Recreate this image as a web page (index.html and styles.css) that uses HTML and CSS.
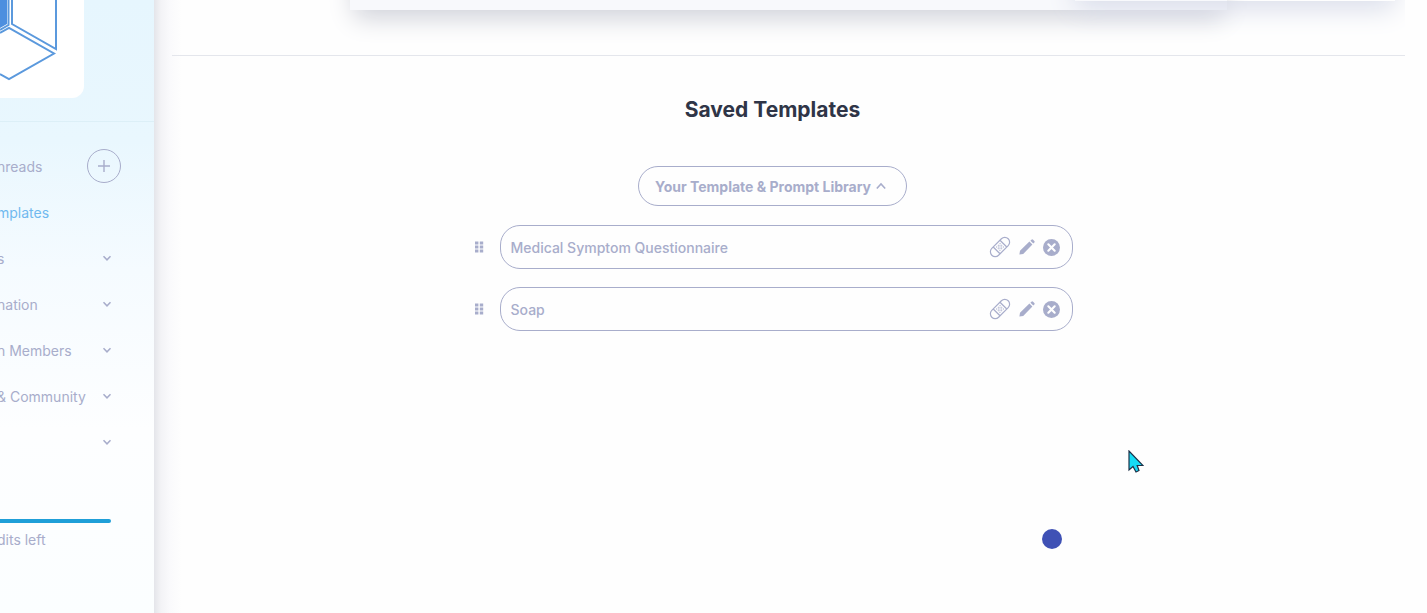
FILE: index.html
```
<!DOCTYPE html>
<html lang="en">
<head>
    <meta charset="UTF-8">
    <meta name="viewport" content="width=device-width, initial-scale=1.0">
    <title>Saved Templates</title>
    <link rel="stylesheet" href="styles.css">
</head>
<body>

    <!-- shared icons -->
    <svg class="sprite" aria-hidden="true">
        <symbol id="icon-down" viewBox="0 0 10 10">
            <path d="M1.5 3.2 5 6.8 8.5 3.2" fill="none" stroke="currentColor" stroke-width="1.5"/>
        </symbol>
        <symbol id="icon-grip" viewBox="0 0 10 12">
            <path d="M1 .5h3.400v3H1zM5.800.5h3.400v3H5.800zM1 4.500h3.400v3H1zM5.800 4.500h3.400v3H5.800zM1 8.500h3.400v3H1zM5.800 8.500h3.400v3H5.800z" fill="currentColor"/>
        </symbol>
        <symbol id="icon-bandage" viewBox="0 0 22 22">
            <g transform="rotate(-45 11 11)" fill="none" stroke="currentColor" stroke-width="1.2">
                <rect x="-0.6" y="6.2" width="23.2" height="9.600" rx="4.8"/>
                <path d="M6.200 6.200v9.600M15.800 6.200v9.600"/>
                <path d="M8 8.600h1M10.500 8.600h1M13 8.600h1M8 11h1M10.500 11h1M13 11h1M8 13.400h1M10.500 13.400h1M13 13.400h1M9.300 9.800h1M11.700 9.800h1M9.300 12.200h1M11.700 12.200h1" stroke-width="1"/>
            </g>
        </symbol>
        <symbol id="icon-pencil" viewBox="0 0 16 16">
            <path d="M0.4 15.6 1 11.8 10.4 2.6 13.4 5.6 4.2 15zM11.4 1.7 12.4.7a1.2 1.2 0 0 1 1.7 0l1.2 1.2a1.2 1.2 0 0 1 0 1.7l-1 1z" fill="currentColor"/>
        </symbol>
        <symbol id="icon-close" viewBox="0 0 16 16">
            <circle cx="8" cy="8" r="8" fill="currentColor"/>
            <path d="M5 5 11 11M11 5 5 11" stroke="#fff" stroke-width="2" stroke-linecap="round"/>
        </symbol>
    </svg>

    <div class="page">
        <aside class="sidebar">
            <div class="brand">
                <svg class="logo" viewBox="0 0 84 98" role="img" aria-label="Logo">
                    <path d="M0 0H7V24L0 28z" fill="#4d8fdf"/>
                    <path d="M8.500 0V25L0 30M12 0V24L56 49V0M0 33 9 28 54 53.500 9 79 0 74" fill="none" stroke="#5b99dd" stroke-width="2"/>
                </svg>
            </div>

            <nav class="menu">
                <div class="menu-item">
                    <a href="#">hreads</a>
                    <button type="button" class="add" aria-label="New thread">
                        <svg width="14" height="14" viewBox="0 0 14 14"><path d="M7 1v12M1 7h12" stroke="currentColor" stroke-width="1.4"/></svg>
                    </button>
                </div>
                <div class="menu-item active"><a href="#">mplates</a></div>
                <div class="menu-item"><a href="#">s</a><svg class="arrow"><use href="#icon-down"/></svg></div>
                <div class="menu-item"><a href="#">nation</a><svg class="arrow"><use href="#icon-down"/></svg></div>
                <div class="menu-item"><a href="#">n Members</a><svg class="arrow"><use href="#icon-down"/></svg></div>
                <div class="menu-item"><a href="#">&amp; Community</a><svg class="arrow"><use href="#icon-down"/></svg></div>
                <div class="menu-item"><a href="#" aria-label="More"></a><svg class="arrow"><use href="#icon-down"/></svg></div>
            </nav>

            <div class="credits">
                <div class="credits-bar"></div>
                <p>dits left</p>
            </div>
        </aside>

        <main class="main">
            <div class="top">
                <div class="card"></div>
                <div class="card-side"></div>
            </div>

            <section class="templates">
                <h1>Saved Templates</h1>
                <button type="button" class="library">
                    Your Template &amp; Prompt Library
                    <svg width="10" height="10" viewBox="0 0 10 10"><path d="M.8 7.500 5 3 9.200 7.500" fill="none" stroke="currentColor" stroke-width="1.6"/></svg>
                </button>

                <ul class="list">
                    <li>
                        <svg class="grip"><use href="#icon-grip"/></svg>
                        <div class="template">
                            <span>Medical Symptom Questionnaire</span>
                            <button type="button" aria-label="Patch"><svg width="22" height="22"><use href="#icon-bandage"/></svg></button>
                            <button type="button" aria-label="Edit"><svg width="16" height="16"><use href="#icon-pencil"/></svg></button>
                            <button type="button" aria-label="Delete"><svg width="17" height="17"><use href="#icon-close"/></svg></button>
                        </div>
                    </li>
                    <li>
                        <svg class="grip"><use href="#icon-grip"/></svg>
                        <div class="template">
                            <span>Soap</span>
                            <button type="button" aria-label="Patch"><svg width="22" height="22"><use href="#icon-bandage"/></svg></button>
                            <button type="button" aria-label="Edit"><svg width="16" height="16"><use href="#icon-pencil"/></svg></button>
                            <button type="button" aria-label="Delete"><svg width="17" height="17"><use href="#icon-close"/></svg></button>
                        </div>
                    </li>
                </ul>
            </section>
        </main>
    </div>

    <!-- floating over the page -->
    <div class="dot"></div>
    <svg class="pointer" viewBox="0 0 16 23" aria-hidden="true">
        <path d="M1 1V20L5 16.500 8 22 11 20.500 9.200 15.500H15z" fill="#16dcf5" stroke="#1d3148" stroke-width="1.2"/>
    </svg>

</body>
</html>
```
FILE: styles.css
```
* {
    box-sizing: border-box;
}
body {
    margin: 0;
    font-family: Inter, "Open Sans", sans-serif;
    font-size: 14px;
    color: #a8adcb;
    background-color: #fefefe;
}
button {
    font-family: inherit;
    color: inherit;
    background: none;
    border: none;
    padding: 0;
    cursor: pointer;
}
svg {
    display: block;
    flex: none;
}
.sprite {
    position: absolute;
    width: 0;
    height: 0;
}
.page {
    display: flex;
    min-height: 100vh;
}

/* Sidebar */
.sidebar {
    width: 154px;
    flex: none;
    overflow: hidden;
    background: linear-gradient(#e6f6fe 0, #e9f7fe 140px, #f5fbff 270px, #fdfeff 430px, #fbfeff 100%);
}
.brand {
    padding-bottom: 23px;
    border-bottom: 1px solid #dceff7;
}
.logo {
    width: 84px;
    height: 98px;
    background-color: #fff;
    border-radius: 0 0 12px 0;
}
.menu {
    padding-top: 21px;
}
.menu-item {
    display: flex;
    align-items: center;
    justify-content: space-between;
    height: 46px;
    padding-right: 33px;
    margin-left: -3px;
}
.menu-item a {
    color: inherit;
    text-decoration: none;
    white-space: nowrap;
}
.menu-item.active {
    color: #70b9ef;
}
.add {
    display: flex;
    align-items: center;
    justify-content: center;
    width: 34px;
    height: 34px;
    border: 1px solid #a8adcb;
    border-radius: 50%;
}
.arrow {
    width: 10px;
    height: 10px;
    margin-right: 9px;
}
.credits {
    margin: 54px 43px 0 -3px;
}
.credits-bar {
    height: 4px;
    border-radius: 2px;
    background-color: #1f9fd8;
}
.credits p {
    margin: 8px 0 0;
    line-height: 18px;
}

/* Main */
.main {
    flex: 1;
    padding: 0 22px 0 18px;
    background: linear-gradient(to right, #e4e5ea 0, #f3f3f6 7px, #fafafc 16px, #fefefe 28px);
}
.top {
    position: relative;
    height: 56px;
    overflow: hidden;
    border-bottom: 1px solid #e4e6ec;
}
/* the card ends just below the top edge, only its foot and shadow show */
.card {
    height: 110px;
    margin: -100px 178px 0;
    background-color: #f8f9fc;
    box-shadow: 0 12px 24px -4px #cfd1d9;
}
.card-side {
    position: absolute;
    top: -99px;
    right: 10px;
    width: 320px;
    height: 100px;
    box-shadow: 0 8px 26px #d9ddea;
}
.templates {
    display: flex;
    flex-direction: column;
    align-items: center;
    padding: 40px 32px 40px 0;
}
h1 {
    margin: 0 0 42px;
    font-size: 21px;
    line-height: 28px;
    font-weight: 700;
    color: #2f3547;
}
.library {
    display: flex;
    align-items: center;
    gap: 5px;
    height: 40px;
    padding: 0 20px 0 16px;
    border: 1px solid #a8adcb;
    border-radius: 20px;
    font-size: 14px;
    font-weight: 700;
}
.list {
    display: flex;
    flex-direction: column;
    gap: 18px;
    width: 100%;
    max-width: 600px;
    margin: 19px 0 0;
    padding: 0;
    list-style: none;
}
.list li {
    display: flex;
    align-items: center;
    gap: 15px;
}
.grip {
    width: 12px;
    height: 12px;
}
.template {
    flex: 1;
    display: flex;
    align-items: center;
    gap: 8px;
    height: 44px;
    padding: 0 12px 0 10px;
    border: 1px solid #a8adcb;
    border-radius: 20px;
    font-size: 14px;
    font-weight: 500;
}
.template span {
    flex: 1;
}

.dot {
    position: absolute;
    left: 1042px;
    top: 529px;
    width: 20px;
    height: 20px;
    border-radius: 50%;
    background-color: #3f51b5;
}
.pointer {
    position: absolute;
    left: 1128px;
    top: 450px;
    width: 16px;
    height: 23px;
}
```
